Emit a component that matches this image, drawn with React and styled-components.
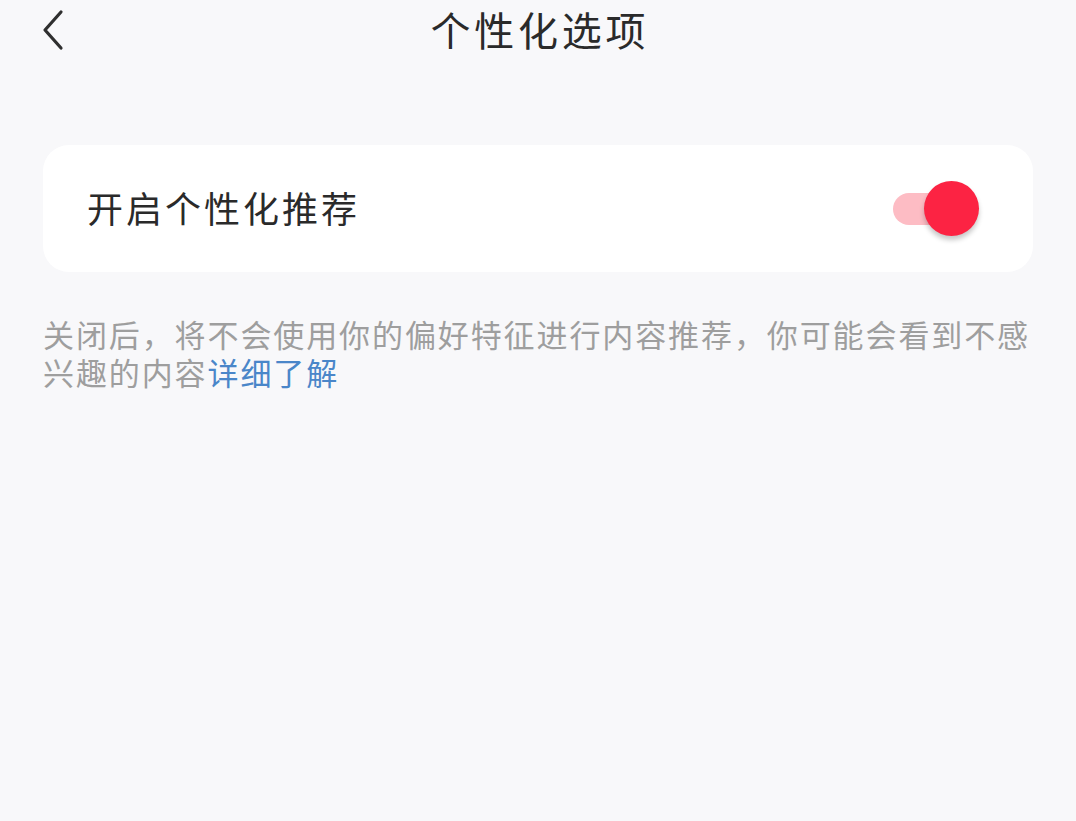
import React from "react";
import styled, { createGlobalStyle } from "styled-components";

const Global = createGlobalStyle`
  html, body { margin: 0; padding: 0; background: #f8f8fa; }
  body { font-family: "Noto Sans CJK SC", "Noto Sans", sans-serif; }
`;

const Page = styled.div`
  width: 1076px;
  min-height: 821px;
  background: #f8f8fa;
  display: flex;
  flex-direction: column;
`;

const Header = styled.header`
  position: relative;
  height: 60px;
  display: flex;
  align-items: center;
  justify-content: center;
`;

const Back = styled.button`
  position: absolute;
  left: 40px;
  top: 8px;
  width: 28px;
  height: 44px;
  padding: 0;
  border: none;
  background: none;
  display: flex;
  align-items: center;
  justify-content: center;
`;

const Title = styled.h1`
  margin: -3px 0 0;
  font-size: 40px;
  font-weight: 400;
  letter-spacing: 3.8px;
  color: #2a2a2a;
  line-height: 58px;
  padding-left: 3.8px;
`;

const Card = styled.div`
  margin: 85px 43px 0;
  height: 127px;
  background: #ffffff;
  border-radius: 26px;
  display: flex;
  align-items: center;
  justify-content: space-between;
  padding: 0 54px 0 44px;
  box-sizing: border-box;
`;

const Label = styled.span`
  font-size: 36px;
  letter-spacing: 3px;
  color: #2a2a2a;
  line-height: 40px;
  margin-top: -4px;
`;

const Switch = styled.div`
  position: relative;
  width: 86px;
  height: 55px;
`;

const Track = styled.div`
  position: absolute;
  left: 0;
  top: 12px;
  width: 64px;
  height: 32px;
  border-radius: 16px;
  background: ${(p) => (p.$on ? "#fdbcc4" : "#d8d8d8")};
`;

const Knob = styled.div`
  position: absolute;
  right: 0;
  top: 0;
  width: 55px;
  height: 55px;
  border-radius: 50%;
  background: ${(p) => (p.$on ? "#fc2343" : "#ffffff")};
  box-shadow: 0 4px 5px rgba(0, 0, 0, 0.22);
`;

const Desc = styled.p`
  margin: 43px 26px 0 43px;
  font-size: 31px;
  letter-spacing: 1.9px;
  line-height: 38px;
  color: #9e9e9e;
`;

const Link = styled.a`
  color: #4a86c9;
  text-decoration: none;
`;

export default function App() {
  const on = true;
  return (
    <Page>
      <Global />
      <Header>
        <Back aria-label="返回">
          <svg width="28" height="44" viewBox="0 0 28 44">
            <path
              d="M21 4 L5 22 L21 40"
              fill="none"
              stroke="#2f2f2f"
              strokeWidth="3.2"
              strokeLinecap="round"
              strokeLinejoin="round"
            />
          </svg>
        </Back>
        <Title>个性化选项</Title>
      </Header>
      <Card>
        <Label>开启个性化推荐</Label>
        <Switch>
          <Track $on={on} />
          <Knob $on={on} />
        </Switch>
      </Card>
      <Desc>
        关闭后，将不会使用你的偏好特征进行内容推荐，你可能会看到不感兴趣的内容
        <Link href="#">详细了解</Link>
      </Desc>
    </Page>
  );
}
